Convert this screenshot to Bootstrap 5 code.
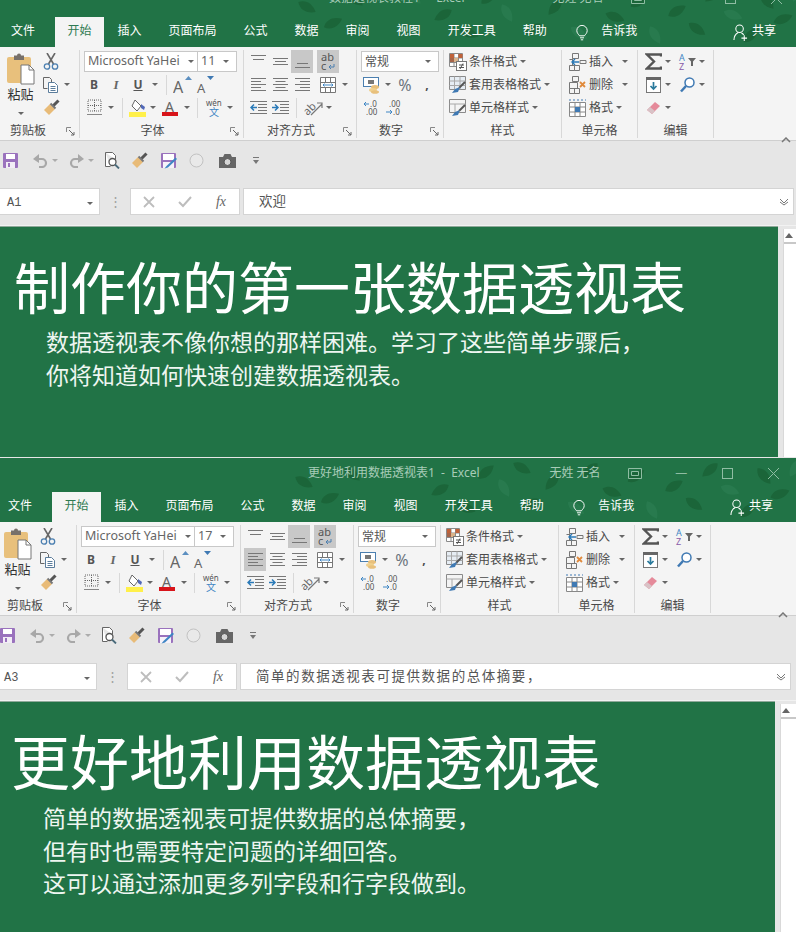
<!DOCTYPE html>
<html lang="zh-CN">
<head>
    <meta charset="UTF-8">
    <meta name="viewport" content="width=device-width, initial-scale=1.0">
    <title>数据透视表教程</title>
    <link href="https://cdn.jsdelivr.net/npm/bootstrap@5.3.0/dist/css/bootstrap.min.css" rel="stylesheet">
    <script src="https://cdn.jsdelivr.net/npm/bootstrap@5.3.0/dist/js/bootstrap.bundle.min.js"></script>
    <style>
        html, body { height: 932px; overflow: hidden; }
        body { font-family: "Noto Sans", "Noto Sans CJK SC", sans-serif; font-size: 12px; color: #4a4a4a; background: #e6e6e6; }
        .xl-win { width: 799px; overflow: hidden; background: #e6e6e6; }
        .xl-first { height: 457px; margin-bottom: 1px; }
        .xl-first .xl-head { margin-top: -17px; }
        .xl-second { height: 474px; margin-left: -3px; }

        .xl-head { height: 64px; background: #217346; color: #fff; }
        .xl-leaves { left: 280px; top: 0; }
        .xl-titlebar { height: 34px; padding-bottom: 4px; color: #a8ccb8; }
        .xl-ttl { width: 540px; padding-left: 254px; text-align: center; white-space: nowrap; }
        .xl-user { margin-left: 13px; width: 63px; white-space: nowrap; }
        .xl-cap { width: 46px; display: flex; align-items: center; justify-content: center; color: #8fbda3; }
        .xl-tabs { height: 30px; }
        .xl-tabs .nav-link { color: #fff; padding: 0 13.5px 4px; height: 30px; line-height: 27px; }
        .xl-tabs .nav-link.xl-file { padding-left: 11px; margin-right: 6.5px; }
        .xl-tabs .nav-link.active { background: #f4f4f4; color: #2f7a52; padding: 0 12.5px 4px; }
        .xl-bulb { margin-left: 16px; margin-right: 13px; padding-top: 6px; }
        .xl-share { margin-left: auto; margin-right: 23px; padding-top: 6px; }
        .xl-sharetxt { line-height: 16px; }

        .xl-ribbon { height: 94px; background: #f4f4f4; border-bottom: 1px solid #cfcfcf; }
        .xl-grp { height: 88px; margin-top: 3px; border-right: 1px solid #d8d8d8; flex: none; }
        .xl-g1 { width: 80px; }
        .xl-g2 { width: 164px; padding-left: 3px; }
        .xl-g3 { width: 113px; padding-left: 3px; }
        .xl-g4 { width: 87px; padding-left: 4px; }
        .xl-g5 { width: 118px; padding-left: 5px; }
        .xl-g6 { width: 76px; padding-left: 7px; }
        .xl-g7 { width: 76px; padding-left: 5px; }
        .xl-row { height: 23px; display: flex; align-items: center; white-space: nowrap; }
        .xl-lbl { height: 19px; line-height: 24px; margin-left: -3px; display: flex; }
        .xl-g1 .xl-lbl { margin-left: 0; }
        .xl-g4 .xl-lbl { margin-left: -4px; }
        .xl-g5 .xl-lbl { margin-left: -5px; }
        .xl-g6 .xl-lbl { margin-left: -7px; }
        .xl-g7 .xl-lbl { margin-left: -5px; }
        .xl-lbltxt { flex: 1; text-align: center; }
        .xl-g1 .xl-lbltxt { flex: none; width: 56px; }
        .xl-launch { width: 18px; display: flex; align-items: center; justify-content: center; margin-left: auto; padding-top: 5px; }

        .xc10, .xc12, .xc18, .xc20, .xc22, .xc24 { display: flex; align-items: center; justify-content: center; height: 23px; flex: none; }
        .xc10 { width: 10px; }
        .xc12 { width: 12px; }
        .xc18 { width: 18px; }
        .xc20 { width: 20px; }
        .xc22 { width: 22px; }
        .xc24 { width: 24px; }
        .xl-on { background: #c8c8c8; }
        .xl-tri { width: 0; height: 0; border-left: 3px solid transparent; border-right: 3px solid transparent; border-top: 3px solid #666; }
        .xl-sep { width: 1px; height: 20px; background: #d8d8d8; margin: 0 5px; flex: none; }
        .xl-pastecol { width: 41px; flex: none; padding-top: 3px; }
        .xl-pastetxt { font-size: 13px; line-height: 17px; margin-top: 1px; color: #333; }
        .xl-pastetri { margin: 9px auto 0; }

        .xl-select { height: 21px; background: #fff; border: 1px solid #c8c8c8; display: flex; align-items: center; flex: none; }
        .xl-sel-font { width: 114px; margin-left: 1px; padding: 0 3px; font-size: 12.5px; color: #666; white-space: nowrap; }
        .xl-sel-size { width: 40px; padding: 0 3px; margin-left: -1px; font-size: 12.5px; color: #666; }
        .xl-sel-num { width: 78px; padding: 0 3px; color: #555; }
        .xl-btntxt { margin-left: 2px; color: #4a4a4a; }
        .xl-b { font-weight: 700; font-size: 12px; color: #555; }
        .xl-i { font-family: "Liberation Serif", serif; font-style: italic; font-weight: 700; font-size: 13px; color: #666; }
        .xl-u { font-weight: 700; font-size: 12px; color: #555; text-decoration: underline; }

        .xl-chev { margin-left: 67px; padding-top: 83px; }
        .xl-qat { height: 47px; padding-top: 7px; }
        .xl-qis { height: 24px; }
        .xl-qis > span { display: block; }
        .xl-q1 { margin-left: 3px; }
        .xl-q2 { margin-left: 15px; }
        .xl-qt { margin-left: 4px; opacity: .45; }
        .xl-q3 { margin-left: 11px; }
        .xl-q4 { margin-left: 10px; }
        .xl-q5 { margin-left: 11px; }
        .xl-q6 { margin-left: 13px; }
        .xl-q7 { margin-left: 12px; }
        .xl-q8 { margin-left: 15px; }
        .xl-q9 { margin-left: 16px; }

        .xl-formula { height: 27px; }
        .xl-box { height: 27px; background: #fff; border: 1px solid #d4d4d4; display: flex; align-items: center; flex: none; }
        .xl-name { width: 101px; margin-left: -1px; padding: 3px 6px 0 7px; font-family: "Liberation Mono", monospace; font-size: 12px; color: #555; }
        .xl-dots { width: 30px; flex: none; text-align: center; color: #a0a0a0; font-size: 13px; line-height: 27px; }
        .xl-fx { width: 110px; margin-right: 3px; }
        .xl-fxc { width: 36px; display: flex; justify-content: center; align-items: center; }
        .xl-fxt { font-family: "Liberation Serif", serif; font-style: italic; font-size: 14px; color: #666; }
        .xl-input { width: 551px; padding: 0 4px 0 15px; color: #555; font-size: 13.5px; white-space: nowrap; }
        .xl-input-two { letter-spacing: 1.55px; font-size: 13.5px; }
        .xl-gap { height: 11px; border-bottom: 1px solid #f2f2f2; }

        .xl-body { height: 240px; }
        .xl-slide { width: 778px; height: 240px; flex: none; background: #217346; color: #fff; border-top: 1px solid #8fa99a; }
        .xl-h1 { font-family: "Noto Sans CJK SC", sans-serif; font-weight: 400; font-size: 56px; line-height: 62px; margin: 27px 0 0 14px; white-space: nowrap; }
        .xl-second .xl-h1 { font-size: 59px; }
        .xl-sub { font-family: "Noto Sans CJK SC", sans-serif; font-size: 23px; line-height: 32.5px; margin: 9px 0 0 46px; color: #eef6f1; white-space: nowrap; }
        .xl-second .xl-sub { margin-top: 10px; }
        .xl-scrollwrap { width: 21px; flex: none; padding-left: 5px; }
        .xl-scroll { height: 100%; background: #fff; border-left: 1px solid #d9d9d9; }
        .xl-scrollup { height: 15px; margin-top: 3px; border-bottom: 2px solid #c8c8c8; display: flex; align-items: center; justify-content: center; }
        .xl-scrollup span { width: 0; height: 0; border-left: 4px solid transparent; border-right: 4px solid transparent; border-bottom: 5px solid #666; margin-right: 5px; }
    </style>
</head>
<body>

    <svg class="d-none" xmlns="http://www.w3.org/2000/svg">
        <symbol id="i-paste" viewBox="0 0 28 32"><rect y="4" width="24" height="26" rx="2" fill="#e8c07c"/><path d="M7 7V2.500h3a2 2 0 0 1 4 0h3V7z" fill="#77706a"/><path d="M14 12h8l5 5v14H14z" fill="#fff" stroke="#777"/><path d="M22 12v5h5" fill="none" stroke="#777"/></symbol>
        <symbol id="i-cut" viewBox="0 0 16 17"><path d="M4 0l6.500 11M12 0L5.500 11" stroke="#666" stroke-width="1.600" fill="none"/><circle cx="4" cy="13.500" r="2.700" fill="none" stroke="#4b7fb0" stroke-width="1.300"/><circle cx="12" cy="13.500" r="2.700" fill="none" stroke="#4b7fb0" stroke-width="1.300"/></symbol>
        <symbol id="i-copy" viewBox="0 0 16 16"><path d="M.500 .500h6l2 2v3M.500 .500v11h4" fill="none" stroke="#666"/><path d="M5.500 5.500h6l3 3v7h-9z" fill="#fff" stroke="#5b7d9c"/><path d="M7.500 9.500h5M7.500 11.500h5M7.500 13.500h5" stroke="#5b7d9c"/></symbol>
        <symbol id="i-brush" viewBox="0 0 17 17"><path d="M10 7l5.500-5.500" stroke="#555" stroke-width="3"/><path d="M1 11l6-6 5 5-6 6z" fill="#e8bb78"/><path d="M7.500 4.500l5 5" stroke="#777" stroke-width="2"/></symbol>
        <symbol id="i-grow" viewBox="0 0 20 18"><polygon points="12,4 19,4 15.500,0" fill="#5b8fc0"/><text x="0" y="17" font-size="16" fill="#666" font-family="Noto Sans">A</text></symbol>
        <symbol id="i-shrink" viewBox="0 0 20 18"><polygon points="12,0 19,0 15.500,4" fill="#3f79b3"/><text x="2" y="17" font-size="13" fill="#666" font-family="Noto Sans">A</text></symbol>
        <symbol id="i-border" viewBox="0 0 15 18"><path d="M1 1h13v11H1zM1 6.500h13M7.500 1v11" stroke="#666" stroke-dasharray="1 1" fill="none"/><path d="M0 15.500h15" stroke="#888"/></symbol>
        <symbol id="i-fill" viewBox="0 0 18 18"><path d="M6 1l6 6-4 5-5-5z" fill="#fff" stroke="#666"/><path d="M12 5l4 3-1 3-3-2z" fill="#5168b8"/><rect y="13" width="17" height="5" fill="#fff04a"/></symbol>
        <symbol id="i-color" viewBox="0 0 17 18"><text x="3" y="13" font-size="14" fill="#666" font-family="Noto Sans">A</text><rect y="13" width="16" height="4" fill="#d8141a"/></symbol>
        <symbol id="i-wen" viewBox="0 0 18 18"><text x="1" y="7" font-size="8" fill="#555" font-family="Noto Sans">wén</text><text x="4" y="17" font-size="10" fill="#3f86c4" font-family="Noto Sans CJK SC">文</text></symbol>
        <symbol id="i-top" viewBox="0 0 15 15"><path d="M0 1.500h15M2 5.500h11" stroke="#777"/></symbol>
        <symbol id="i-mid" viewBox="0 0 15 15"><path d="M0 4.500h15M2 7.500h11M0 10.500h15" stroke="#777"/></symbol>
        <symbol id="i-bot" viewBox="0 0 15 15"><path d="M2 9.500h11M0 13.500h15" stroke="#777"/></symbol>
        <symbol id="i-left" viewBox="0 0 15 15"><path d="M0 1.500h15M0 4.500h10M0 7.500h15M0 10.500h10M0 13.500h15" stroke="#777"/></symbol>
        <symbol id="i-center" viewBox="0 0 15 15"><path d="M0 1.500h15M2.500 4.500h10M0 7.500h15M2.500 10.500h10M0 13.500h15" stroke="#777"/></symbol>
        <symbol id="i-right" viewBox="0 0 15 15"><path d="M0 1.500h15M5 4.500h10M0 7.500h15M5 10.500h10M0 13.500h15" stroke="#777"/></symbol>
        <symbol id="i-wrap" viewBox="0 0 16 20"><text x="1" y="9" font-size="11" fill="#555" font-family="Noto Sans">ab</text><text x="1" y="18" font-size="11" fill="#555" font-family="Noto Sans">c</text><path d="M14 12v3H9m2-2l-2 2 2 2" fill="none" stroke="#4b7fb0"/></symbol>
        <symbol id="i-merge" viewBox="0 0 16 16"><path d="M.500 .500h15v15H.500zM.500 5.500h15M.500 10.500h15M5.500 .500v5M10.500 .500v5M5.500 10.500v5M10.500 10.500v5" fill="#fff" stroke="#777"/><path d="M3 8h10M4.500 6.500L3 8l1.500 1.500M11.500 6.500L13 8l-1.500 1.500" fill="none" stroke="#3f86c4"/></symbol>
        <symbol id="i-outdent" viewBox="0 0 17 15"><path d="M0 1.500h17M8 4.500h9M8 7.500h9M8 10.500h9M0 13.500h17" stroke="#777"/><path d="M7 7.500H1M4 4.500l-3 3 3 3" fill="none" stroke="#2a7ab8" stroke-width="1.500"/></symbol>
        <symbol id="i-indent" viewBox="0 0 17 15"><path d="M0 1.500h17M8 4.500h9M8 7.500h9M8 10.500h9M0 13.500h17" stroke="#777"/><path d="M0 7.500h6M3 4.500l3 3-3 3" fill="none" stroke="#2a7ab8" stroke-width="1.500"/></symbol>
        <symbol id="i-orient" viewBox="0 0 22 18"><text x="1" y="14" font-size="11" fill="#666" font-family="Noto Sans" transform="rotate(-45 7 10)">ab</text><path d="M9 16L20 5M15 4h5v5" fill="none" stroke="#777" stroke-width="1.200"/></symbol>
        <symbol id="i-money" viewBox="0 0 18 18"><rect x=".500" y="1.500" width="15" height="9" fill="#fff" stroke="#4b7fb0"/><rect x="5" y="4" width="6" height="4" fill="#777"/><ellipse cx="12" cy="11" rx="4" ry="2" fill="#e8c07c"/><ellipse cx="10" cy="14" rx="4" ry="2" fill="#f0d08c"/><ellipse cx="12" cy="16" rx="4" ry="1.800" fill="#e8c07c"/></symbol>
        <symbol id="i-decup" viewBox="0 0 18 16"><path d="M6 4H1M3 2L1 4l2 2" fill="none" stroke="#3f86c4"/><text x="7" y="7" font-size="8" fill="#555" font-family="Noto Sans">.0</text><text x="3" y="15" font-size="8" fill="#555" font-family="Noto Sans">.00</text></symbol>
        <symbol id="i-decdn" viewBox="0 0 18 16"><text x="4" y="7" font-size="8" fill="#555" font-family="Noto Sans">.00</text><path d="M1 12h6M5 10l2 2-2 2" fill="none" stroke="#3f86c4"/><text x="8" y="15" font-size="8" fill="#555" font-family="Noto Sans">.0</text></symbol>
        <symbol id="i-cond" viewBox="0 0 18 18"><path d="M.500 .500h13v13H.500zM5 .500v13M9.500 .500v13M.500 5h13M.500 9.500h13" fill="#fff" stroke="#8a8a8a"/><path d="M1 1h4v4H1zM9.500 1h4v4h-4z" fill="#c0623a"/><path d="M1 5h4v4H1z" fill="#a6654a"/><path d="M5 5h4v4H5z" fill="#d9b38a"/><rect x="7.500" y="8.500" width="10" height="9" fill="#fff" stroke="#777"/><path d="M10 12h5M10 14.500h5M14 10.500l-3 5.500" stroke="#555"/></symbol>
        <symbol id="i-table" viewBox="0 0 18 18"><path d="M.500 .500h16v13H.500z" fill="#e6edf4" stroke="#8a8a8a"/><path d="M5.500 .500v13M11 .500v13M.500 5h16M.500 9.500h16" stroke="#a8a8a8"/><path d="M16 6l-6 6" stroke="#555" stroke-width="2"/><path d="M11 11l-5 2-3 4 6-1z" fill="#3f79b3"/></symbol>
        <symbol id="i-style" viewBox="0 0 18 18"><path d="M.500 .500h16v13H.500z" fill="#f4f4f4" stroke="#8a8a8a"/><path d="M.500 5h16M6 5v8.500" stroke="#a8a8a8"/><path d="M16 6l-6 6" stroke="#555" stroke-width="2"/><path d="M11 11l-5 2-3 4 6-1z" fill="#3f79b3"/></symbol>
        <symbol id="i-ins" viewBox="0 0 18 18"><path d="M3.500 .500h6v5h-6zM.500 12.500h5v5h-5zM5.500 12.500h5v5h-5zM.500 6.500h3M3.500 5.500v7M11 7.500h6v3h-6z" fill="none" stroke="#777"/><path d="M10 9H3M6 6L3 9l3 3" fill="none" stroke="#2a7ab8" stroke-width="1.400"/></symbol>
        <symbol id="i-del" viewBox="0 0 18 18"><path d="M3.500 .500h6v5h-6zM.500 12.500h5v5h-5zM5.500 12.500h5v5h-5zM.500 6.500h8v6h-8z" fill="none" stroke="#777"/><path d="M11 6l5 5M16 6l-5 5" stroke="#e08a3c" stroke-width="1.800"/></symbol>
        <symbol id="i-fmt" viewBox="0 0 18 18"><path d="M.500 3.500h16v14H.500zM.500 8h16M.500 13h16M6 3.500v14M11 3.500v14" fill="#fff" stroke="#888"/><rect x="6" y="8" width="5" height="5" fill="#3f79b3"/><path d="M0 1h17" stroke="#3f79b3" stroke-dasharray="2 2"/></symbol>
        <symbol id="i-sum" viewBox="0 0 17 17"><path d="M16 3.500V1.500H2L9 8.500 2 15.500h14v-2" fill="none" stroke="#555" stroke-width="2.400"/></symbol>
        <symbol id="i-sort" viewBox="0 0 19 18"><text x="1" y="8" font-size="9" fill="#3f86c4" font-family="Noto Sans">A</text><text x="1" y="17" font-size="9" fill="#8a5aa8" font-family="Noto Sans">Z</text><path d="M10 5h8l-3 3.500V13h-2V8.500z" fill="#666"/></symbol>
        <symbol id="i-down" viewBox="0 0 15 16"><rect x=".500" y=".500" width="14" height="15" fill="#fff" stroke="#777"/><rect width="15" height="3" fill="#666"/><path d="M7.500 5v7M4.500 9l3 3 3-3" fill="none" stroke="#2a7a9c" stroke-width="1.700"/></symbol>
        <symbol id="i-find" viewBox="0 0 15 16"><circle cx="9.500" cy="5.500" r="4.500" fill="#fff" stroke="#3f79b3" stroke-width="1.500"/><path d="M6 9l-5 5.500" stroke="#3f79b3" stroke-width="2.500"/></symbol>
        <symbol id="i-erase" viewBox="0 0 15 15"><path d="M1 10l8-8 5 4-8 8z" fill="#e58a9a"/><path d="M1 10l3-3 5 4-3 3z" fill="#d8c2c6"/></symbol>
        <symbol id="i-launch" viewBox="0 0 9 9"><path d="M.500 5V.500H5" fill="none" stroke="#888"/><path d="M3 3l5 5M8 5v3H5" fill="none" stroke="#666"/></symbol>
        <symbol id="i-save" viewBox="0 0 15 15"><rect width="15" height="15" rx="1" fill="#9a72bd"/><rect x="3" y="1" width="9" height="5" fill="#fff"/><rect x="3" y="9" width="9" height="6" fill="#f2edf6"/><rect x="5" y="10" width="2" height="4" fill="#9a72bd"/></symbol>
        <symbol id="i-undo" viewBox="0 0 15 14"><path d="M3 5h6a4 4 0 0 1 0 8H6" fill="none" stroke="#a8a8a8" stroke-width="2.200"/><path d="M6 0v9L0 5z" fill="#a8a8a8"/></symbol>
        <symbol id="i-redo" viewBox="0 0 15 14"><path d="M12 5H6a4 4 0 0 0 0 8h3" fill="none" stroke="#a8a8a8" stroke-width="2.200"/><path d="M9 0v9l6-4z" fill="#a8a8a8"/></symbol>
        <symbol id="i-preview" viewBox="0 0 16 17"><path d="M1.500 .500h7l3 3v4M1.500 .500v14h5" fill="#fff" stroke="#666"/><circle cx="8.500" cy="10" r="3.500" fill="#fff" stroke="#555" stroke-width="1.300"/><path d="M11 12.500l4 4" stroke="#4a6a7a" stroke-width="1.800"/></symbol>
        <symbol id="i-saveas" viewBox="0 0 16 16"><rect width="15" height="15" rx="1" fill="#9a72bd"/><rect x="2" y="1" width="11" height="6" fill="#fff"/><rect x="2" y="9" width="11" height="6" fill="#f6f2fa"/><path d="M14.500 4.500L5.500 13l-2 2.500 3.500-1 9-8.500z" fill="#3f86c4"/></symbol>
        <symbol id="i-ring" viewBox="0 0 15 15"><circle cx="7.500" cy="7.500" r="6.500" fill="#e9e9e9" stroke="#c2c2c2"/></symbol>
        <symbol id="i-camera" viewBox="0 0 17 14"><path d="M0 3h4l1.500-3h6L13 3h4v11H0z" fill="#666"/><circle cx="8.500" cy="8" r="3.500" fill="#d6d6d6" stroke="#555"/></symbol>
        <symbol id="i-more" viewBox="0 0 8 9"><path d="M1 1.500h6" stroke="#777"/><path d="M1 4h6L4 8z" fill="#777"/></symbol>
        <symbol id="i-x" viewBox="0 0 12 12"><path d="M1 1l10 10M11 1L1 11" stroke="#bdbdbd" stroke-width="1.800"/></symbol>
        <symbol id="i-check" viewBox="0 0 14 12"><path d="M1 6l4 4 8-9" fill="none" stroke="#bdbdbd" stroke-width="2"/></symbol>
        <symbol id="i-bulb" viewBox="0 0 15 20"><path d="M4.500 13.500C3 11.500 1 10 1 7a6.500 6.500 0 0 1 13 0c0 3-2 4.500-3.500 6.500z" fill="none" stroke="#fff" stroke-width="1.200"/><path d="M5 16h5M6 18.500h3" stroke="#fff" stroke-width="1.200"/></symbol>
        <symbol id="i-share" viewBox="0 0 16 18"><circle cx="7" cy="5" r="4" fill="none" stroke="#fff" stroke-width="1.100"/><path d="M1 17c0-4 2-6.500 4.500-8M9 9.500c1 .500 1.800 1.200 2.400 2M12 12v6M9 15h6" fill="none" stroke="#fff" stroke-width="1.100"/></symbol>
        <symbol id="i-layout" viewBox="0 0 14 11"><path d="M.500 .500h13v10H.500zM3.500 3.500h7v4h-7z" fill="none" stroke="#8fbda3"/></symbol>
        <symbol id="i-leaf" viewBox="0 0 20 12"><path d="M0 6C5 0 13 0 20 6 13 12 5 12 0 6z"/></symbol>
    </svg>

    <div id="app"></div>

    <script>
        const ic = (name, w, h) => `<svg width="${w}" height="${h}"><use href="#i-${name}"/></svg>`;
        const tri = (cls = "xc10") => `<div class="${cls}"><span class="xl-tri"></span></div>`;
        const cell = (name, w, h, cls = "xc22") => `<div class="${cls}">${ic(name, w, h)}</div>`;
        const sep = `<div class="xl-sep"></div>`;
        const label = (txt, launch) => `<div class="xl-lbl"><div class="xl-lbltxt">${txt}</div>${launch ? `<div class="xl-launch">${ic("launch", 9, 9)}</div>` : ""}</div>`;

        // 叶子背景，两个窗口共用
        const leafSpots = [
            [14, 18, 30], [40, 34, -25], [62, 10, 40], [120, 8, 40], [150, 26, 150], [176, 44, 20], [196, 8, -40], [214, 24, 60],
            [232, 4, 30], [240, 40, -30], [262, 18, 130], [286, 44, 35], [300, 6, 140], [322, 28, 20], [346, 12, -35], [362, 46, 60],
            [384, 22, -30], [404, 40, 35], [420, 6, 140], [440, 26, 20], [458, 46, -45], [474, 12, 50], [490, 30, -20], [505, 4, 120]
        ];
        const leaves = leafSpots.map(([x, y, r], i) =>
            `<use href="#i-leaf" x="${x}" y="${y}" width="26" height="12" fill="${i % 4 === 3 ? "#287a4e" : "#1b6539"}" transform="rotate(${r} ${x + 13} ${y + 6})"/>`
        ).join("");

        function header(title) {
            return `
            <div class="xl-head position-relative">
                <svg class="xl-leaves position-absolute" width="519" height="64">${leaves}</svg>
                <div class="xl-titlebar d-flex align-items-center position-relative">
                    <div class="xl-ttl">${title}&nbsp; - &nbsp;Excel</div>
                    <div class="xl-user">无姓 无名</div>
                    <div class="xl-cap">${ic("layout", 14, 11)}</div>
                    <div class="xl-cap">—</div>
                    <div class="xl-cap"><svg width="11" height="11"><rect x=".5" y=".5" width="10" height="10" fill="none" stroke="#8fbda3"/></svg></div>
                    <div class="xl-cap"><svg width="11" height="11"><path d="M0 0l11 11M11 0L0 11" stroke="#8fbda3"/></svg></div>
                </div>
                <ul class="nav xl-tabs position-relative align-items-start flex-nowrap">
                    <li class="nav-item"><a class="nav-link xl-file" href="#">文件</a></li>
                    <li class="nav-item"><a class="nav-link active" href="#">开始</a></li>
                    <li class="nav-item"><a class="nav-link" href="#">插入</a></li>
                    <li class="nav-item"><a class="nav-link" href="#">页面布局</a></li>
                    <li class="nav-item"><a class="nav-link" href="#">公式</a></li>
                    <li class="nav-item"><a class="nav-link" href="#">数据</a></li>
                    <li class="nav-item"><a class="nav-link" href="#">审阅</a></li>
                    <li class="nav-item"><a class="nav-link" href="#">视图</a></li>
                    <li class="nav-item"><a class="nav-link" href="#">开发工具</a></li>
                    <li class="nav-item"><a class="nav-link" href="#">帮助</a></li>
                    <li class="xl-bulb">${ic("bulb", 12, 16)}</li>
                    <li class="nav-item"><a class="nav-link p-0" href="#">告诉我</a></li>
                    <li class="xl-share d-flex gap-1 align-items-start"><span>${ic("share", 15, 17)}</span><span class="xl-sharetxt">共享</span></li>
                </ul>
            </div>`;
        }

        function ribbon(size, leftOn) {
            return `
            <div class="xl-ribbon d-flex">
                <div class="xl-grp xl-g1">
                    <div class="d-flex">
                        <div class="xl-pastecol text-center">
                            ${ic("paste", 28, 32)}
                            <div class="xl-pastetxt">粘贴</div>
                            <span class="xl-tri d-block xl-pastetri"></span>
                        </div>
                        <div>
                            <div class="xl-row">${cell("cut", 16, 17, "xc20")}</div>
                            <div class="xl-row">${cell("copy", 16, 16, "xc20")}${tri("xc12")}</div>
                            <div class="xl-row">${cell("brush", 17, 17, "xc20")}</div>
                        </div>
                    </div>
                    ${label("剪贴板", true)}
                </div>
                <div class="xl-grp xl-g2">
                    <div class="xl-row">
                        <div class="xl-select xl-sel-font">Microsoft YaHei<span class="xl-tri ms-auto"></span></div>
                        <div class="xl-select xl-sel-size">${size}<span class="xl-tri ms-auto me-1"></span></div>
                    </div>
                    <div class="xl-row">
                        <div class="xc22 xl-b">B</div><div class="xc22 xl-i">I</div><div class="xc22 xl-u">U</div>${tri("xc12")}${sep}
                        ${cell("grow", 20, 18)}${cell("shrink", 20, 18)}
                    </div>
                    <div class="xl-row">
                        ${cell("border", 15, 18)}${tri("xc12")}<div class="xl-sep"></div>
                        ${cell("fill", 18, 18, "xc20")}${tri()}${cell("color", 17, 18, "xc24")}${tri()}${sep}
                        ${cell("wen", 18, 18)}${tri()}
                    </div>
                    ${label("字体", true)}
                </div>
                <div class="xl-grp xl-g3">
                    <div class="xl-row">
                        ${cell("top", 15, 15)}${cell("mid", 15, 15)}<div class="xc22 xl-on">${ic("bot", 15, 15)}</div>
                        <div class="xc22 xl-on ms-1">${ic("wrap", 16, 20)}</div>
                    </div>
                    <div class="xl-row">
                        <div class="xc22 ${leftOn ? "xl-on" : ""}">${ic("left", 15, 15)}</div>${cell("center", 15, 15)}${cell("right", 15, 15)}
                        ${cell("merge", 16, 16, "xc22 ms-1")}${tri("xc12")}
                    </div>
                    <div class="xl-row">
                        ${cell("outdent", 17, 15)}${cell("indent", 17, 15)}<div class="xl-sep"></div>
                        ${cell("orient", 22, 18)}${tri()}
                    </div>
                    ${label("对齐方式", true)}
                </div>
                <div class="xl-grp xl-g4">
                    <div class="xl-row"><div class="xl-select xl-sel-num">常规<span class="xl-tri ms-auto me-1"></span></div></div>
                    <div class="xl-row">
                        ${cell("money", 18, 18)}${tri()}<div class="xc24 fs-6 text-secondary">%</div><div class="xc20 fw-bold">,</div>
                    </div>
                    <div class="xl-row">${cell("decup", 18, 16)}${cell("decdn", 18, 16)}</div>
                    ${label("数字", true)}
                </div>
                <div class="xl-grp xl-g5">
                    <div class="xl-row">${cell("cond", 18, 18, "xc18")}<span class="xl-btntxt">条件格式</span>${tri("xc12")}</div>
                    <div class="xl-row">${cell("table", 18, 18, "xc18")}<span class="xl-btntxt">套用表格格式</span>${tri("xc12")}</div>
                    <div class="xl-row">${cell("style", 18, 18, "xc18")}<span class="xl-btntxt">单元格样式</span>${tri("xc12")}</div>
                    ${label("样式")}
                </div>
                <div class="xl-grp xl-g6">
                    <div class="xl-row">${cell("ins", 18, 18, "xc18")}<span class="xl-btntxt">插入</span>${tri("xc24")}</div>
                    <div class="xl-row">${cell("del", 18, 18, "xc18")}<span class="xl-btntxt">删除</span>${tri("xc24")}</div>
                    <div class="xl-row">${cell("fmt", 18, 18, "xc18")}<span class="xl-btntxt">格式</span>${tri("xc12")}</div>
                    ${label("单元格")}
                </div>
                <div class="xl-grp xl-g7">
                    <div class="xl-row">${cell("sum", 17, 17, "xc20")}${tri()}<div class="ms-1"></div>${cell("sort", 19, 18, "xc20")}${tri()}</div>
                    <div class="xl-row">${cell("down", 15, 16, "xc20")}${tri()}<div class="ms-1"></div>${cell("find", 15, 16, "xc20")}${tri()}</div>
                    <div class="xl-row">${cell("erase", 15, 15, "xc20")}${tri()}</div>
                    ${label("编辑")}
                </div>
                <div class="xl-chev"><svg width="10" height="6"><path d="M1 5l4-4 4 4" fill="none" stroke="#777" stroke-width="1.5"/></svg></div>
            </div>`;
        }

        function bars(cellName, formula, formulaCls) {
            return `
            <div class="xl-qat d-flex">
                <div class="xl-qis d-flex align-items-center">
                    <span class="xl-q1">${ic("save", 15, 15)}</span>
                    <span class="xl-q2">${ic("undo", 15, 14)}</span><span class="xl-qt"><span class="xl-tri d-block"></span></span>
                    <span class="xl-q3">${ic("redo", 15, 14)}</span><span class="xl-qt"><span class="xl-tri d-block"></span></span>
                    <span class="xl-q4">${ic("preview", 16, 17)}</span>
                    <span class="xl-q5">${ic("brush", 17, 17)}</span>
                    <span class="xl-q6">${ic("saveas", 16, 16)}</span>
                    <span class="xl-q7">${ic("ring", 15, 15)}</span>
                    <span class="xl-q8">${ic("camera", 17, 14)}</span>
                    <span class="xl-q9">${ic("more", 8, 9)}</span>
                </div>
            </div>
            <div class="xl-formula d-flex">
                <div class="xl-box xl-name">${cellName}<span class="xl-tri ms-auto"></span></div>
                <div class="xl-dots">⋮</div>
                <div class="xl-box xl-fx">
                    <div class="xl-fxc">${ic("x", 12, 12)}</div>
                    <div class="xl-fxc">${ic("check", 14, 12)}</div>
                    <div class="xl-fxc xl-fxt">fx</div>
                </div>
                <div class="xl-box xl-input ${formulaCls}">${formula}<svg class="ms-auto" width="10" height="8"><path d="M1 1l4 4 4-4M1 4l4 3 4-3" fill="none" stroke="#777"/></svg></div>
            </div>
            <div class="xl-gap"></div>`;
        }

        function slide(h, lines) {
            return `
            <div class="xl-body d-flex">
                <div class="xl-slide">
                    <div class="xl-h1">${h}</div>
                    <div class="xl-sub">${lines.join("<br>")}</div>
                </div>
                <div class="xl-scrollwrap"><div class="xl-scroll"><div class="xl-scrollup"><span></span></div></div></div>
            </div>`;
        }

        document.getElementById("app").innerHTML = `
            <div class="xl-win xl-first">
                ${header("数据透视表教程1")}
                ${ribbon("11", false)}
                ${bars("A1", "欢迎", "")}
                ${slide("制作你的第一张数据透视表", ["数据透视表不像你想的那样困难。学习了这些简单步骤后，", "你将知道如何快速创建数据透视表。"])}
            </div>
            <div class="xl-win xl-second">
                ${header("更好地利用数据透视表1")}
                ${ribbon("17", true)}
                ${bars("A3", "简单的数据透视表可提供数据的总体摘要，", "xl-input-two")}
                ${slide("更好地利用数据透视表", ["简单的数据透视表可提供数据的总体摘要，", "但有时也需要特定问题的详细回答。", "这可以通过添加更多列字段和行字段做到。"])}
            </div>`;
    </script>
</body>
</html>
